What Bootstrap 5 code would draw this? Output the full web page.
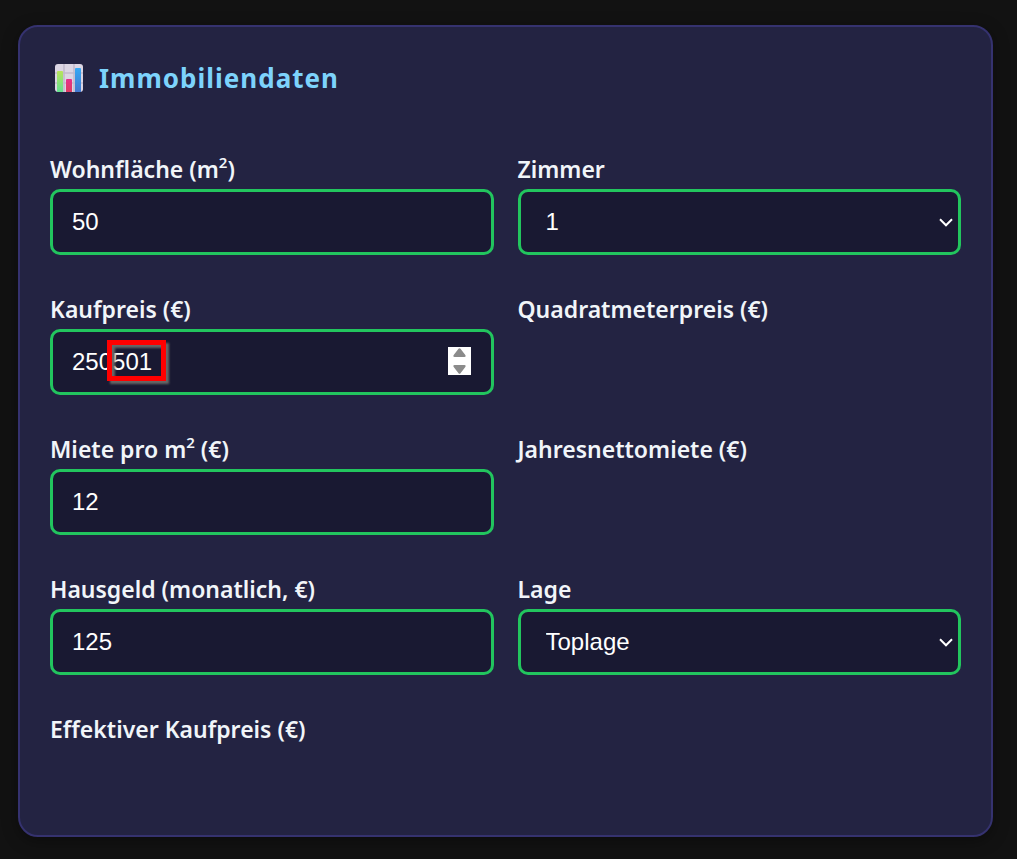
<!DOCTYPE html>
<html lang="de">
<head>
<meta charset="utf-8">
<meta name="viewport" content="width=device-width, initial-scale=1">
<title>Immobiliendaten</title>
<link href="https://cdn.jsdelivr.net/npm/bootstrap@5.3.0/dist/css/bootstrap.min.css" rel="stylesheet">
<style>
  body { background: #121212; color: #f1f5f9; font-family: "Noto Sans", "Open Sans", sans-serif; }
  .page { padding: 25px 24px 22px 18px; }
  .panel { background: #232342; border: 2px solid #35326f; border-radius: 20px; padding: 30px; box-shadow: 0 4px 16px rgba(0, 0, 0, .35); }
  .panel-title { color: #7dd3fc; font-size: 26px; font-weight: 700; line-height: 42px; letter-spacing: 1px; gap: 16px; padding-left: 5px; margin-bottom: 54px; }
  .fields { --bs-gutter-x: 24px; --bs-gutter-y: 38px; }
  .field-label { display: block; font-size: 23px; font-weight: 600; line-height: 32px; margin-bottom: 4px; white-space: nowrap; }
  .field-label sup { font-size: 15px; line-height: 0; top: -10px; }
  .field-box { height: 66px; padding: 0 19px; font: 24px/36px "Liberation Sans", Arial, sans-serif; }
  .field-box, .field-box:focus { color: #fff; background-color: #191932; border: 3px solid #22c55e; border-radius: 10px; box-shadow: none; }
  select.field-box { padding: 0 25px; background: #191932 url("data:image/svg+xml,%3Csvg xmlns='http://www.w3.org/2000/svg' viewBox='0 0 14 9'%3E%3Cpath d='M1 1.3l6 6 6-6' fill='none' stroke='white' stroke-width='2'/%3E%3C/svg%3E") no-repeat right 5px center / 14px 9px; }
  input[type=number] { appearance: textfield; -moz-appearance: textfield; }
  input::-webkit-inner-spin-button { display: none; }
  .stepper { right: 23px; top: 18px; width: 23px; height: 28px; background: #fff; }
  .marker { left: 57px; top: 11px; width: 59px; height: 41px; border: 5px solid #f00; filter: drop-shadow(3px 3px 1px #666); }
  .result { display: block; min-height: 56px; }
</style>
</head>
<body>
<main class="page">
  <form class="panel">
    <h2 class="panel-title d-flex align-items-center">
      <svg width="28" height="28" viewBox="0 0 28 28" aria-hidden="true">
        <defs>
          <linearGradient id="g1" x2="0" y2="1"><stop stop-color="#b9e45c"/><stop offset="1" stop-color="#62df91"/></linearGradient>
          <linearGradient id="g2" x2="0" y2="1"><stop stop-color="#e82f8c"/><stop offset="1" stop-color="#dc3c60"/></linearGradient>
          <linearGradient id="g3" x2="0" y2="1"><stop stop-color="#36a9f5"/><stop offset="1" stop-color="#4278d0"/></linearGradient>
        </defs>
        <rect width="28" height="28" rx="3" fill="#dcd6e4"/>
        <path d="M9 0v28M19 0v28M0 9h28M0 19h28" stroke="#c2bbcd" stroke-width="1.6"/>
        <path d="M2 28V8q0-1 1-1h4q1 0 1 1v20z" fill="url(#g1)"/>
        <path d="M11 28V16q0-1 1-1h4q1 0 1 1v12z" fill="url(#g2)"/>
        <path d="M20 28V5q0-1 1-1h4q1 0 1 1v23z" fill="url(#g3)"/>
      </svg>
      <span>Immobiliendaten</span>
    </h2>
    <div class="row fields">
      <div class="col-6">
        <label class="field-label" for="flaeche">Wohnfläche (m<sup>2</sup>)</label>
        <input class="form-control field-box" id="flaeche" type="number" value="50">
      </div>
      <div class="col-6">
        <label class="field-label" for="zimmer">Zimmer</label>
        <select class="form-select field-box" id="zimmer"><option>1</option><option>2</option><option>3</option></select>
      </div>
      <div class="col-6">
        <label class="field-label" for="preis">Kaufpreis (€)</label>
        <div class="position-relative">
          <input class="form-control field-box" id="preis" type="number" value="250501">
          <svg class="stepper position-absolute" viewBox="0 0 23 28" aria-hidden="true"><path d="M10.5 1.8q1-1 2 0l5 6.5q.8 1.7-1 1.7h-10q-1.800 0-1-1.700zM10.500 26.200q1 1 2 0l5-6.500q.8-1.700-1-1.700h-10q-1.800 0-1 1.700z" fill="#8b8b8b"/></svg>
          <div class="marker position-absolute pe-none"></div>
        </div>
      </div>
      <div class="col-6">
        <label class="field-label" for="qm">Quadratmeterpreis (€)</label>
        <output class="result" id="qm"></output>
      </div>
      <div class="col-6">
        <label class="field-label" for="miete">Miete pro m<sup>2</sup> (€)</label>
        <input class="form-control field-box" id="miete" type="number" value="12">
      </div>
      <div class="col-6">
        <label class="field-label" for="jahr">Jahresnettomiete (€)</label>
        <output class="result" id="jahr"></output>
      </div>
      <div class="col-6">
        <label class="field-label" for="hausgeld">Hausgeld (monatlich, €)</label>
        <input class="form-control field-box" id="hausgeld" type="number" value="125">
      </div>
      <div class="col-6">
        <label class="field-label" for="lage">Lage</label>
        <select class="form-select field-box" id="lage"><option>Toplage</option><option>Gute Lage</option></select>
      </div>
      <div class="col-6">
        <label class="field-label" for="effektiv">Effektiver Kaufpreis (€)</label>
        <output class="result" id="effektiv"></output>
      </div>
    </div>
  </form>
</main>
<script src="https://cdn.jsdelivr.net/npm/bootstrap@5.3.0/dist/js/bootstrap.bundle.min.js"></script>
</body>
</html>
